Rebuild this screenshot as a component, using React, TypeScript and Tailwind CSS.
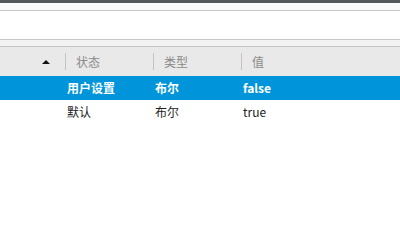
import React from "react";

const font = { fontFamily: '"Noto Sans CJK SC", "Noto Sans", sans-serif' };

const rows = [
  { name: "用户设置", type: "布尔", value: "false", selected: true },
  { name: "默认", type: "布尔", value: "true", selected: false },
];

function HeaderCell({ label }: { label: string }) {
  return (
    <div className="flex h-full w-[88px] items-center">
      <div className="h-[17px] w-px bg-[#c4c4c4]" />
      <span className="ml-[10px] text-[12px] text-[#8a8a8a]">{label}</span>
    </div>
  );
}

export default function App() {
  return (
    <div className="flex h-[200px] w-[400px] flex-col bg-white" style={font}>
      {/* Window edge */}
      <div className="h-[3px] bg-[#555759]" />
      <div className="h-[7px] bg-[#fafafa] border-b border-[#c6c6c6] box-content" />

      {/* Toolbar area */}
      <div className="h-[28px] bg-white border-b border-[#c6c6c6] box-content" />
      <div className="h-[6px] bg-[#f2f2f2] border-b border-[#c6c6c6] box-content" />

      {/* Column header */}
      <div className="flex h-[29px] items-center bg-[#e9e9e9]">
        <div className="flex h-full w-[65px] items-center justify-end pr-[15px]">
          <svg width="8" height="4" viewBox="0 0 8 4">
            <path d="M0 4 L4 0 L8 4 Z" fill="#111" />
          </svg>
        </div>
        <HeaderCell label="状态" />
        <HeaderCell label="类型" />
        <HeaderCell label="值" />
      </div>

      {/* Rows */}
      {rows.map((r) => (
        <div
          key={r.name}
          className={`flex h-[24px] items-center text-[12px] ${
            r.selected ? "bg-[#0095da] font-bold text-white" : "bg-white text-[#222]"
          }`}
        >
          <div className="w-[67px]" />
          <div className="w-[88px]">{r.name}</div>
          <div className="w-[88px]">{r.type}</div>
          <div className="w-[88px]">{r.value}</div>
        </div>
      ))}
    </div>
  );
}
